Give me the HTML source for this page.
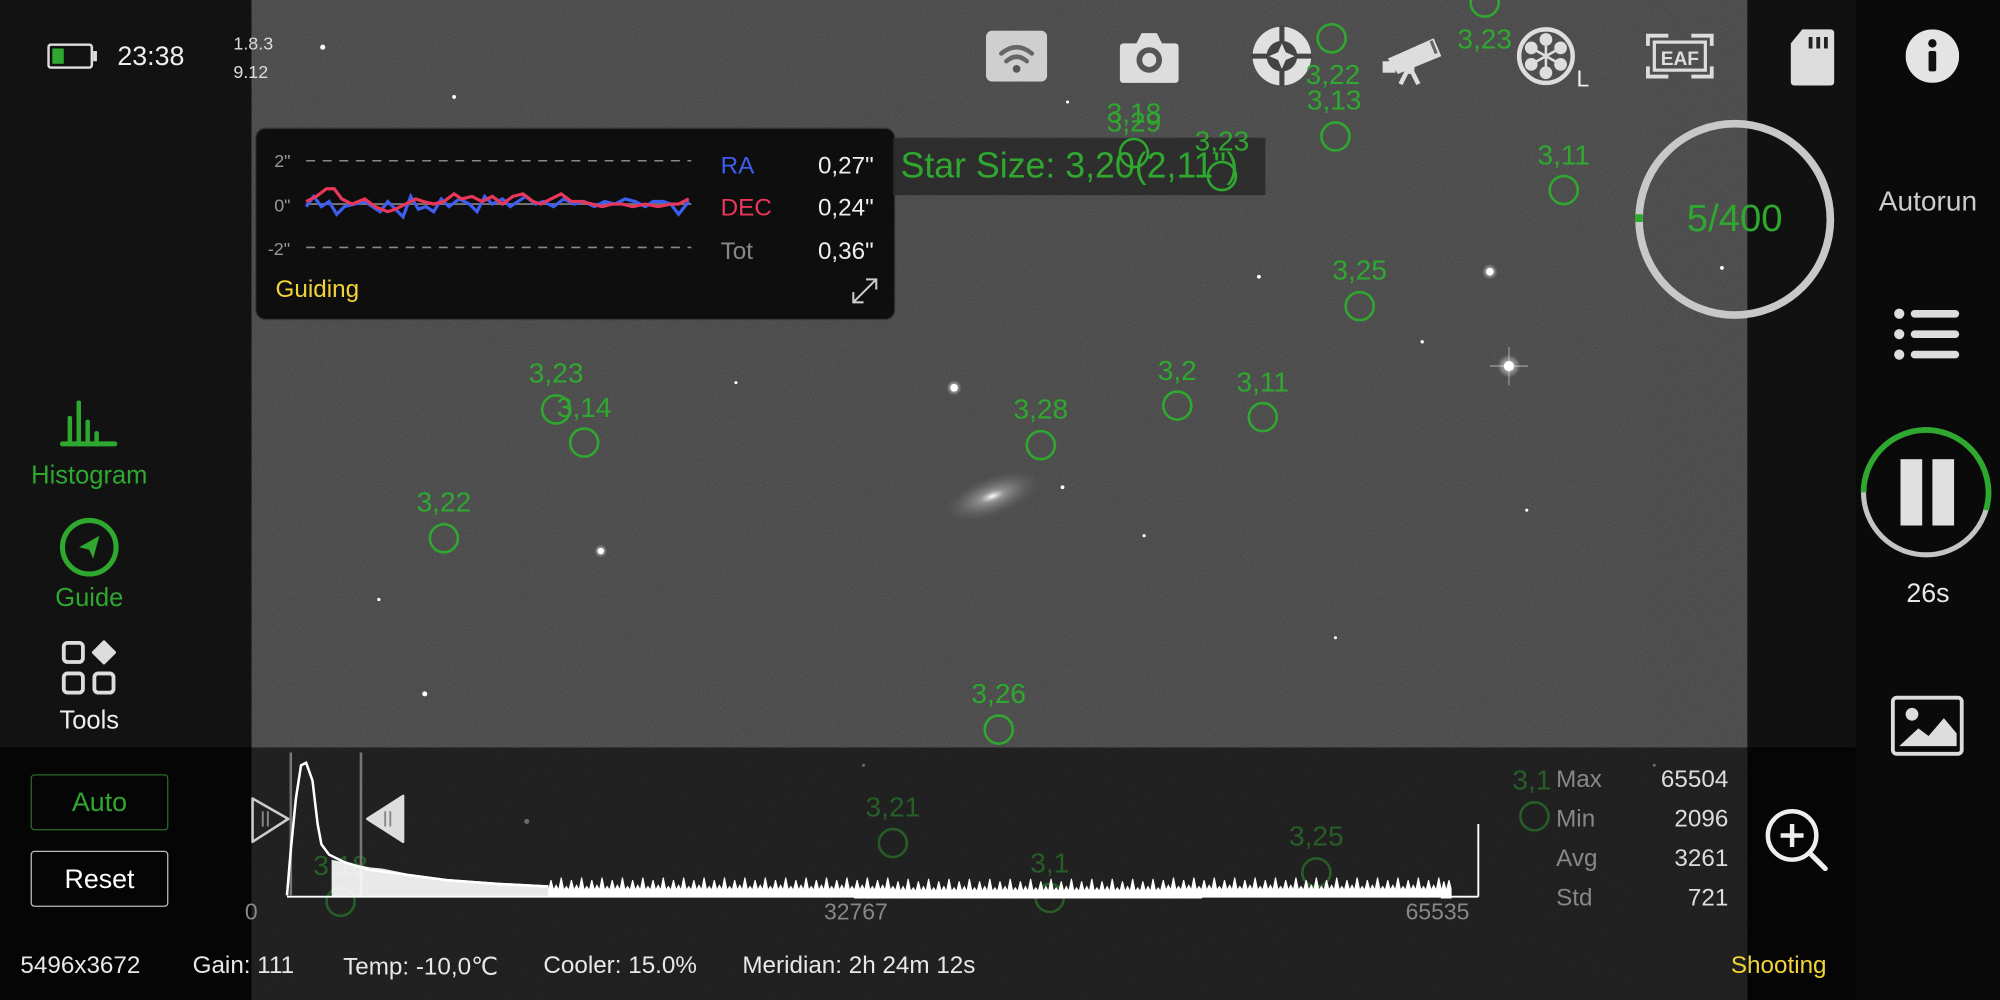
<!DOCTYPE html>
<html><head><meta charset="utf-8">
<style>
html,body{margin:0;padding:0;background:#000;overflow:hidden;width:2000px;height:1000px}
#w{position:absolute;left:0;top:0;width:1568px;height:784px;transform:scale(1.27551);transform-origin:0 0;font-family:"Liberation Sans",sans-serif;overflow:hidden}
.a{position:absolute}
.g{color:#2fa82f}
.lbl{position:absolute;color:#2fa82f;font-size:22px;transform:translate(-50%,-50%);white-space:nowrap;line-height:1}
.dim{opacity:.45}
.st{position:absolute;color:#888;font-size:19px}
.sv{position:absolute;color:#ddd;font-size:19px;text-align:right;width:80px}
.bt{position:absolute;color:#e8e8e8;font-size:19px;top:747px;white-space:nowrap}
</style></head><body><div id="w">
<!-- sky -->
<svg class="a" style="left:197px;top:0" width="1173" height="784">
<defs><filter id="n"><feTurbulence type="fractalNoise" baseFrequency="0.9" numOctaves="1" seed="3"/><feColorMatrix type="matrix" values="0 0 0 0 0.27 0 0 0 0 0.27 0 0 0 0 0.27 0 0 0 0.5 0"/></filter>
<radialGradient id="gx"><stop offset="0" stop-color="#fff"/><stop offset=".25" stop-color="#bbb" stop-opacity=".6"/><stop offset="1" stop-color="#666" stop-opacity="0"/></radialGradient>
<radialGradient id="sg"><stop offset="0" stop-color="#fff"/><stop offset=".4" stop-color="#fff" stop-opacity=".5"/><stop offset="1" stop-color="#fff" stop-opacity="0"/></radialGradient></defs>
<rect width="1173" height="784" fill="#444"/>
<rect width="1173" height="784" filter="url(#n)" opacity=".6"/>
<ellipse cx="581" cy="389" rx="40" ry="16" fill="url(#gx)" transform="rotate(-20 581 389)"/>
<circle cx="986" cy="287" r="9" fill="url(#sg)"/><circle cx="971" cy="213" r="6" fill="url(#sg)"/><circle cx="551" cy="304" r="6" fill="url(#sg)"/><circle cx="274" cy="432" r="5" fill="url(#sg)"/>
<g fill="#fff">
<circle cx="56" cy="37" r="2"/><circle cx="159" cy="76" r="1.5"/><circle cx="986" cy="287" r="4"/><circle cx="971" cy="213" r="3"/><circle cx="551" cy="304" r="3"/><circle cx="274" cy="432" r="2.5"/><circle cx="136" cy="544" r="2"/><circle cx="636" cy="382" r="1.5"/><circle cx="790" cy="217" r="1.5"/><circle cx="918" cy="268" r="1.3"/><circle cx="100" cy="470" r="1.3"/><circle cx="380" cy="300" r="1.2"/><circle cx="700" cy="420" r="1.2"/><circle cx="850" cy="500" r="1.2"/><circle cx="480" cy="600" r="1.2"/><circle cx="300" cy="200" r="1.2"/><circle cx="1000" cy="400" r="1.2"/><circle cx="1100" cy="600" r="1.2"/><circle cx="1153" cy="210" r="1.5"/><circle cx="640" cy="80" r="1.2"/><circle cx="216" cy="644" r="2"/>
</g>
<path d="M986 272V302M971 287H1001" stroke="#fff" stroke-width=".8" opacity=".5"/>
</svg>
<!-- left panel -->
<div class="a" style="left:0;top:0;width:197px;height:586px;background:#121212"></div>
<!-- right panels -->
<div class="a" style="left:1370px;top:0;width:85px;height:586px;background:#111"></div>
<div class="a" style="left:1455px;top:0;width:113px;height:784px;background:#0a0a0a"></div>
<!-- bottom -->
<div class="a" style="left:0;top:586px;width:197px;height:198px;background:#050505"></div>
<div class="a" style="left:197px;top:586px;width:1173px;height:198px;background:rgba(0,0,0,.58)"></div>
<div class="a" style="left:1370px;top:586px;width:85px;height:198px;background:#050505"></div>

<!-- progress ring -->
<svg class="a" style="left:1280px;top:92px" width="160" height="160"><circle cx="80" cy="80" r="75" fill="none" stroke="#c8c8c8" stroke-width="6"/><path d="M5 76V82" stroke="#2fa82f" stroke-width="6"/></svg>
<div class="a g" style="left:1300px;top:155px;width:120px;text-align:center;font-size:30px">5/400</div>

<!-- status top-left -->
<svg class="a" style="left:37px;top:34px" width="40" height="20"><rect x="1" y="1" width="34" height="18" rx="2" fill="none" stroke="#ddd" stroke-width="2"/><rect x="4" y="4" width="9" height="12" fill="#2fa82f"/><rect x="36" y="6" width="3" height="8" fill="#ddd"/></svg>
<div class="a" style="left:92px;top:33px;color:#eee;font-size:21px">23:38</div>
<div class="a" style="left:183px;top:26px;color:#ddd;font-size:14px">1.8.3</div>
<div class="a" style="left:183px;top:48px;color:#ddd;font-size:14px">9.12</div>

<!-- guide panel -->
<div class="a" style="left:200px;top:100px;width:500px;height:149px;background:#0e0e0e;border:1px solid #3a3a3a;border-radius:8px"></div>
<div class="a" style="left:215px;top:118px;color:#999;font-size:14px">2"</div>
<div class="a" style="left:215px;top:153px;color:#999;font-size:14px">0"</div>
<div class="a" style="left:210px;top:187px;color:#999;font-size:14px">-2"</div>
<svg class="a" style="left:230px;top:110px" width="320" height="100">
<path d="M10 16H312M10 84H312" stroke="#888" stroke-width="1.2" stroke-dasharray="7 6"/>
<path d="M10 50H312" stroke="#777" stroke-width="1.5"/>
<path d="M10 52L16 44L22 52L28 48L34 58L40 52L48 50L56 48L62 52L68 56L74 48L80 54L86 60L92 44L98 54L104 52L110 56L116 46L122 52L130 46L138 50L144 56L150 44L156 50L164 46L170 52L176 48L182 44L190 50L196 48L204 52L212 46L220 50L228 48L236 52L244 48L252 50L260 46L268 48L276 52L282 48L290 48L296 50L302 58L310 48" fill="none" stroke="#3d5ef0" stroke-width="2.5"/>
<path d="M10 48L18 44L26 38L32 38L38 46L46 50L56 46L64 52L74 56L80 54L88 50L96 46L102 48L110 50L118 48L126 42L132 46L140 44L148 48L156 44L164 50L172 44L180 42L188 48L194 50L202 46L210 42L218 48L226 48L234 50L242 52L250 50L258 50L266 52L276 50L286 52L296 50L302 50L310 46" fill="none" stroke="#e8375a" stroke-width="2.5"/>
</svg>
<div class="a" style="left:565px;top:120px;color:#3d5ef0;font-size:19px">RA</div>
<div class="a" style="left:565px;top:153px;color:#e8375a;font-size:19px">DEC</div>
<div class="a" style="left:565px;top:187px;color:#888;font-size:19px">Tot</div>
<div class="a" style="left:600px;top:120px;width:85px;text-align:right;color:#eee;font-size:19px">0,27"</div>
<div class="a" style="left:600px;top:153px;width:85px;text-align:right;color:#eee;font-size:19px">0,24"</div>
<div class="a" style="left:600px;top:187px;width:85px;text-align:right;color:#eee;font-size:19px">0,36"</div>
<div class="a" style="left:216px;top:217px;color:#f2d43a;font-size:19px">Guiding</div>
<svg class="a" style="left:667px;top:217px" width="22" height="22"><path d="M2 20L20 2M12 2H20V10M2 12V20H10" fill="none" stroke="#ccc" stroke-width="1.6"/></svg>

<!-- star size -->
<div class="a" style="left:700px;top:108px;width:292px;height:45px;background:rgba(40,40,40,.85)"></div>
<div class="a g" style="left:706px;top:114px;font-size:28px;white-space:nowrap">Star Size: 3,20(2,11")</div>

<!-- top icons -->
<svg class="a" style="left:773px;top:24px" width="48" height="40"><rect width="48" height="40" rx="5" fill="#cfcfcf"/><g fill="none" stroke="#666" stroke-width="3.5" stroke-linecap="round"><path d="M12 18Q24 8 36 18"/><path d="M16 24Q24 17 32 24"/></g><circle cx="24" cy="30" r="3" fill="#555"/></svg>
<svg class="a" style="left:877px;top:22px" width="48" height="44"><path d="M4 12H14L18 4H30L34 12H44Q47 12 47 15V40Q47 43 44 43H4Q1 43 1 40V15Q1 12 4 12Z" fill="#ddd"/><circle cx="24" cy="25" r="10" fill="#555"/><circle cx="24" cy="25" r="5.5" fill="#ddd"/></svg>
<svg class="a" style="left:981px;top:20px" width="48" height="48"><circle cx="24" cy="24" r="23" fill="#e0e0e0"/><path d="M24 0V48M0 24H48" stroke="#444" stroke-width="4"/><circle cx="24" cy="24" r="12" fill="#444"/><path d="M24 14L27 21L34 24L27 27L24 34L21 27L14 24L21 21Z" fill="#e0e0e0"/></svg>
<svg class="a" style="left:1082px;top:24px" width="54" height="44"><path d="M6 22L42 6L48 20L14 34Z" fill="#ddd"/><path d="M40 8L44 18" stroke="#666" stroke-width="2.5"/><rect x="2" y="24" width="10" height="9" fill="#ddd"/><path d="M22 30L16 42M24 30L30 42" stroke="#ddd" stroke-width="3.5"/><circle cx="23" cy="30" r="4" fill="#ddd"/></svg>
<svg class="a" style="left:1188px;top:20px" width="48" height="48"><circle cx="24" cy="24" r="21" fill="none" stroke="#ddd" stroke-width="3.5"/><g fill="#ddd"><circle cx="24" cy="11" r="5"/><circle cx="24" cy="37" r="5"/><circle cx="12.5" cy="17.5" r="5"/><circle cx="35.5" cy="17.5" r="5"/><circle cx="12.5" cy="30.5" r="5"/><circle cx="35.5" cy="30.5" r="5"/></g><path d="M24 11V37M12.5 17.5L35.5 30.5M35.5 17.5L12.5 30.5" stroke="#ddd" stroke-width="2"/></svg>
<div class="a" style="left:1236px;top:52px;color:#eee;font-size:18px">L</div>
<svg class="a" style="left:1290px;top:24px" width="54" height="40"><path d="M2 12V4H18M36 4H52V12M2 28V36H18M36 36H52V28" fill="none" stroke="#ddd" stroke-width="3"/><rect x="7" y="9" width="40" height="22" fill="none" stroke="#ddd" stroke-width="2.5"/><text x="27" y="27" text-anchor="middle" fill="#ddd" font-family="Liberation Sans" font-weight="bold" font-size="15">EAF</text></svg>
<svg class="a" style="left:1403px;top:22px" width="36" height="46"><path d="M10 1H32Q35 1 35 4V42Q35 45 32 45H4Q1 45 1 42V12Z" fill="#ddd"/><rect x="15" y="7" width="3" height="9" fill="#222"/><rect x="21" y="7" width="3" height="9" fill="#222"/><rect x="27" y="7" width="3" height="9" fill="#222"/></svg>
<svg class="a" style="left:1494px;top:23px" width="42" height="42"><circle cx="21" cy="21" r="21" fill="#e4e4e4"/><circle cx="21" cy="11" r="3.3" fill="#111"/><rect x="18" y="17" width="6" height="16" rx="1.5" fill="#111"/></svg>

<!-- right controls -->
<div class="a" style="left:1455px;top:145px;width:113px;text-align:center;color:#ccc;font-size:22px">Autorun</div>
<svg class="a" style="left:1484px;top:240px" width="54" height="44"><g fill="#ddd"><circle cx="5" cy="6" r="4"/><circle cx="5" cy="22" r="4"/><circle cx="5" cy="38" r="4"/><rect x="14" y="3" width="38" height="6" rx="3"/><rect x="14" y="19" width="38" height="6" rx="3"/><rect x="14" y="35" width="38" height="6" rx="3"/></g></svg>
<svg class="a" style="left:1458px;top:334px" width="104" height="104"><circle cx="52" cy="52" r="49" fill="none" stroke="#c4c4c4" stroke-width="4"/><path d="M3 52A49 49 0 1 1 99 66" fill="none" stroke="#2fa82f" stroke-width="4.5"/><rect x="32" y="26" width="17" height="52" fill="#e0e0e0"/><rect x="57" y="26" width="17" height="52" fill="#e0e0e0"/></svg>
<div class="a" style="left:1455px;top:454px;width:113px;text-align:center;color:#e8e8e8;font-size:21px">26s</div>
<svg class="a" style="left:1482px;top:545px" width="58" height="48"><rect x="2" y="2" width="54" height="44" rx="3" fill="none" stroke="#ddd" stroke-width="3"/><circle cx="17" cy="15" r="5" fill="#ddd"/><path d="M7 40L22 26L30 32L42 18L52 30V40Z" fill="#ddd"/></svg>

<!-- left controls -->
<svg class="a" style="left:46px;top:312px" width="48" height="40"><g fill="#2fa82f"><rect x="14" y="2" width="3.5" height="36" rx="1.5"/><rect x="7" y="14" width="3.5" height="24" rx="1.5"/><rect x="21" y="17" width="3.5" height="21" rx="1.5"/><rect x="28" y="26" width="3.5" height="12" rx="1.5"/><rect x="1" y="34" width="45" height="4" rx="2"/></g></svg>
<div class="a g" style="left:0;top:362px;width:140px;text-align:center;font-size:20px">Histogram</div>
<svg class="a" style="left:46px;top:405px" width="48" height="48"><circle cx="24" cy="24" r="21" fill="none" stroke="#2fa82f" stroke-width="4"/><path d="M16 24L32 15L27 33L24 26Z" fill="#2fa82f"/></svg>
<div class="a g" style="left:0;top:458px;width:140px;text-align:center;font-size:20px">Guide</div>
<svg class="a" style="left:47px;top:501px" width="46" height="46"><g fill="none" stroke="#ddd" stroke-width="3"><rect x="3" y="3" width="15" height="15" rx="3"/><rect x="3" y="27" width="15" height="15" rx="3"/><rect x="27" y="27" width="15" height="15" rx="3"/></g><path d="M34.5 2L43 10.5L34.5 19L26 10.5Z" fill="#ddd" stroke="#ddd" stroke-width="2" stroke-linejoin="round"/></svg>
<div class="a" style="left:0;top:554px;width:140px;text-align:center;color:#eee;font-size:20px">Tools</div>

<div class="a g" style="left:24px;top:607px;width:106px;height:42px;border:1px solid #2a6a2a;border-radius:3px;text-align:center;line-height:44px;font-size:21px">Auto</div>
<div class="a" style="left:24px;top:667px;width:106px;height:42px;border:1px solid #bbb;border-radius:3px;text-align:center;line-height:44px;font-size:21px;color:#fff">Reset</div>

<!-- star labels -->
<svg class="a" style="left:0;top:0" width="1568" height="784"><g fill="none" stroke="#2fa82f" stroke-width="2">
<circle cx="1164" cy="2" r="11"/><circle cx="1044" cy="30" r="11"/><circle cx="1047" cy="107" r="11"/><circle cx="889" cy="120" r="11"/><circle cx="958" cy="138" r="11"/><circle cx="1226" cy="149" r="11"/><circle cx="1066" cy="240" r="11"/><circle cx="436" cy="321" r="11"/><circle cx="458" cy="347" r="11"/><circle cx="923" cy="318" r="11"/><circle cx="990" cy="327" r="11"/><circle cx="816" cy="349" r="11"/><circle cx="348" cy="422" r="11"/><circle cx="783" cy="572" r="11"/>
<g opacity=".45"><circle cx="700" cy="661" r="11"/><circle cx="823" cy="704" r="11"/><circle cx="1032" cy="684" r="11"/><circle cx="267" cy="707" r="11"/><circle cx="1203" cy="640" r="11"/></g></g></svg>
<div class="lbl" style="left:1164px;top:31px">3,23</div>
<div class="lbl" style="left:1045px;top:59px">3,22</div>
<div class="lbl" style="left:1046px;top:79px">3,13</div>
<div class="lbl" style="left:889px;top:89px">3,18</div>
<div class="lbl" style="left:889px;top:96px">3,29</div>
<div class="lbl" style="left:958px;top:111px">3,23</div>
<div class="lbl" style="left:1226px;top:122px">3,11</div>
<div class="lbl" style="left:1066px;top:212px">3,25</div>
<div class="lbl" style="left:436px;top:293px">3,23</div>
<div class="lbl" style="left:458px;top:320px">3,14</div>
<div class="lbl" style="left:923px;top:291px">3,2</div>
<div class="lbl" style="left:990px;top:300px">3,11</div>
<div class="lbl" style="left:816px;top:321px">3,28</div>
<div class="lbl" style="left:348px;top:394px">3,22</div>
<div class="lbl" style="left:783px;top:544px">3,26</div>
<div class="lbl dim" style="left:700px;top:633px">3,21</div>
<div class="lbl dim" style="left:823px;top:677px">3,1</div>
<div class="lbl dim" style="left:1032px;top:656px">3,25</div>
<div class="lbl dim" style="left:267px;top:679px">3,18</div>
<div class="lbl dim" style="left:1201px;top:612px">3,1</div>

<!-- histogram -->
<svg class="a" style="left:190px;top:586px" width="990" height="125">
<defs><clipPath id="hc"><rect x="0" y="0" width="948" height="125"/></clipPath></defs>
<path d="M38 4V116M93 4V116" stroke="#777" stroke-width="2"/>
<path d="M35 116L38 80L42 40L46 14L50 12L55 26L59 60L62 76L68 84L80 90L100 96L130 100L160 104L200 107L240 109" fill="none" stroke="#fff" stroke-width="2"/>
<path d="M70 88L100 94L110 95L130 99L160 103L200 106L240 108V117H70Z" fill="#fff" opacity=".9"/>
<rect x="240" y="113" width="708" height="4" fill="#fff"/>
<g clip-path="url(#hc)">
<path id="jg" d="M240 112l2-8l2 8l2-4l2 4l2-10l2 10l2-3l2 3l2-8l2 8l2-4l2 4l2-10l2 10l2-3l2 3l2-8l2 8l2-4l2 4l2-10l2 10l2-3l2 3l2-8l2 8l2-4l2 4l2-10l2 10l2-3l2 3l2-8l2 8l2-4l2 4l2-10l2 10l2-3l2 3l2-8l2 8l2-4l2 4l2-10l2 10l2-3l2 3l2-8l2 8l2-4l2 4l2-10l2 10l2-3l2 3l2-8l2 8l2-4l2 4l2-10l2 10l2-3l2 3l2-8l2 8l2-4l2 4l2-10l2 10l2-3l2 3l2-8l2 8l2-4l2 4l2-10l2 10l2-3l2 3l2-8l2 8l2-4l2 4l2-10l2 10l2-3l2 3l2-8l2 8l2-4l2 4l2-10l2 10l2-3l2 3l2-8l2 8l2-4l2 4l2-10l2 10l2-3l2 3l2-8l2 8l2-4l2 4l2-10l2 10l2-3l2 3l2-8l2 8l2-4l2 4l2-10l2 10l2-3l2 3l2-8l2 8l2-4l2 4l2-10l2 10l2-3l2 3l2-8l2 8l2-4l2 4l2-10l2 10l2-3l2 3V117H240Z" fill="#fff" stroke="#fff" stroke-width=".8"/>
<use href="#jg" transform="translate(240 1)"/>
<use href="#jg" transform="translate(480 0)"/>
<use href="#jg" transform="translate(700 1)"/>
</g>
<path d="M969 60V117M35 117H969" stroke="#fff" stroke-width="1.5"/>
<path d="M8 40L36 56L8 74Z" fill="#222" stroke="#ccc" stroke-width="2" stroke-linejoin="round"/>
<path d="M126 38L98 56L126 74Z" fill="#ddd" stroke="#ddd" stroke-width="2" stroke-linejoin="round"/>
<path d="M16 50V62M20 50V62" stroke="#888" stroke-width="1.5"/><path d="M112 50V62M116 50V62" stroke="#888" stroke-width="1.5"/>
</svg>
<div class="a" style="left:192px;top:705px;color:#888;font-size:18px">0</div>
<div class="a" style="left:646px;top:705px;color:#888;font-size:18px">32767</div>
<div class="a" style="left:1102px;top:705px;color:#888;font-size:18px">65535</div>
<div class="st" style="left:1220px;top:601px">Max</div><div class="sv" style="left:1275px;top:601px">65504</div>
<div class="st" style="left:1220px;top:632px">Min</div><div class="sv" style="left:1275px;top:632px">2096</div>
<div class="st" style="left:1220px;top:663px">Avg</div><div class="sv" style="left:1275px;top:663px">3261</div>
<div class="st" style="left:1220px;top:694px">Std</div><div class="sv" style="left:1275px;top:694px">721</div>
<svg class="a" style="left:1383px;top:633px" width="52" height="52"><circle cx="22" cy="22" r="19" fill="none" stroke="#eee" stroke-width="3.5"/><path d="M22 13V31M13 22H31" stroke="#eee" stroke-width="3.5"/><path d="M36 36L48 48" stroke="#eee" stroke-width="4" stroke-linecap="round"/></svg>

<!-- bottom bar -->
<div class="bt" style="left:16px">5496x3672</div>
<div class="bt" style="left:151px">Gain: 111</div>
<div class="bt" style="left:269px">Temp: -10,0℃</div>
<div class="bt" style="left:426px">Cooler: 15.0%</div>
<div class="bt" style="left:582px">Meridian: 2h 24m 12s</div>
<div class="bt" style="left:1357px;color:#f2d43a">Shooting</div>
</div></body></html>
